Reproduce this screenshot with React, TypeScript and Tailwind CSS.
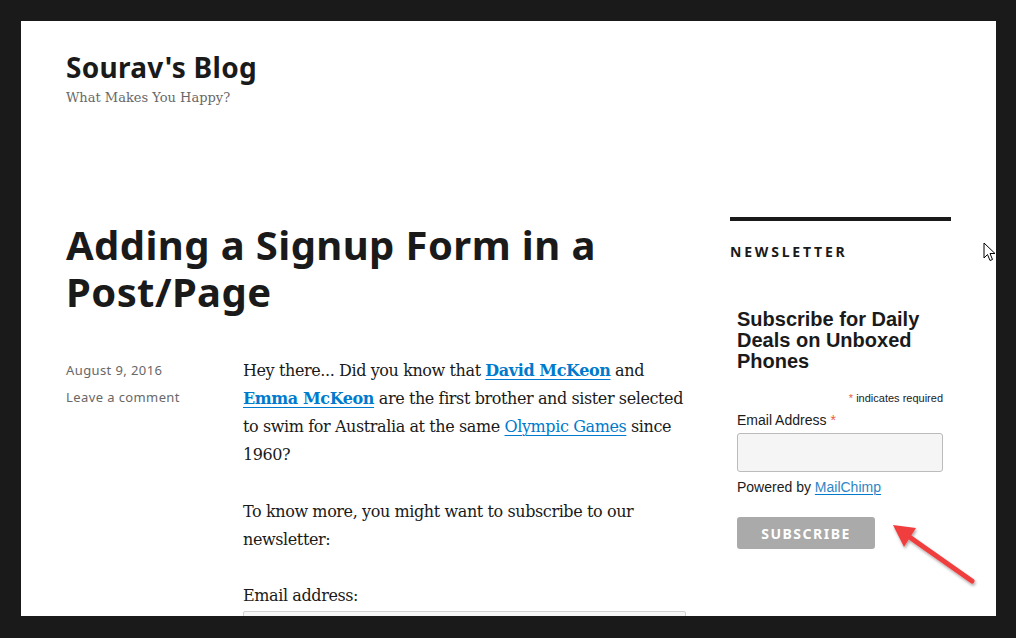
import React from 'react'

const sans = { fontFamily: '"Noto Sans", "Open Sans", sans-serif' }
const serif = { fontFamily: '"DejaVu Serif", "Liberation Serif", serif' }
const arial = { fontFamily: '"Liberation Sans", Arial, sans-serif' }

function Arrow() {
  return (
    <svg className="absolute left-[880px] top-[512px]" width="110" height="90" viewBox="0 0 110 90">
      <defs>
        <filter id="sh" x="-20%" y="-20%" width="140%" height="140%">
          <feDropShadow dx="1" dy="2" stdDeviation="1.5" floodColor="#000" floodOpacity="0.35" />
        </filter>
      </defs>
      <g filter="url(#sh)">
        <line x1="28" y1="24" x2="92" y2="69" stroke="#f03e3e" strokeWidth="5" strokeLinecap="round" />
        <polygon points="13,13 36,16 24,35" fill="#f03e3e" />
      </g>
    </svg>
  )
}

function Cursor() {
  return (
    <svg className="absolute left-[983px] top-[242px]" width="14" height="21" viewBox="0 0 14 21">
      <path d="M1 1 L1 16 L4.5 12.5 L7 18.5 L9.5 17.5 L7 11.5 L12 11.5 Z" fill="#fff" stroke="#000" strokeWidth="1" strokeLinejoin="round" />
    </svg>
  )
}

export default function App() {
  return (
    <div className="relative w-[1016px] h-[638px] overflow-hidden bg-[#1a1a1a] pt-[21px] pl-[21px]">
      <div className="w-[975px] h-[595px] overflow-hidden bg-white px-[45px] text-[#1a1a1a]">
        {/* Site header */}
        <header className="pt-[28px]">
          <div className="text-[28px] font-bold leading-[36px] tracking-[0.3px]" style={sans}>
            Sourav's Blog
          </div>
          <div className="text-[13px] leading-[18px] text-[#686868] mt-[4px]" style={serif}>
            What Makes You Happy?
          </div>
        </header>

        <div className="flex gap-[44px] mt-[110px]">
          {/* Main column */}
          <main className="w-[620px]">
            <h1 className="text-[40px] font-bold leading-[47px] mt-[4px] tracking-[0.4px]" style={sans}>
              Adding a Signup Form in a Post/Page
            </h1>

            <div className="flex mt-[42px]">
              <div className="w-[177px] shrink-0 text-[13px] text-[#686868] pt-[3px] tracking-[0.4px]" style={sans}>
                <div className="leading-[20px]">August 9, 2016</div>
                <div className="leading-[20px] mt-[7px]">Leave a comment</div>
              </div>
              <div className="w-[443px] text-[16px] leading-[28px] tracking-[-0.4px]" style={serif}>
                <p>
                  Hey there... Did you know that{' '}
                  <a className="font-bold text-[#007acc] underline decoration-1 underline-offset-[3px]">David McKeon</a> and{' '}
                  <a className="font-bold text-[#007acc] underline decoration-1 underline-offset-[3px]">Emma McKeon</a> are the first brother and sister selected to swim for Australia at the same{' '}
                  <a className="text-[#007acc] underline decoration-1 underline-offset-[3px]">Olympic Games</a> since 1960?
                </p>
                <p className="mt-[29px]">To know more, you might want to subscribe to our newsletter:</p>
                <p className="mt-[28px]">Email address:</p>
                <div className="mt-[1px] h-[40px] w-full rounded-[2px] border border-[#d1d1d1] bg-[#f7f7f7]" />
              </div>
            </div>
          </main>

          {/* Sidebar */}
          <aside className="w-[221px] shrink-0">
            <div className="h-[4px] bg-[#1a1a1a]" />
            <h2 className="mt-[21px] text-[14px] font-bold tracking-[2.8px] leading-[20px]" style={sans}>
              NEWSLETTER
            </h2>
            <div className="pl-[7px] pr-[8px] mt-[47px]" style={arial}>
              <h3 className="text-[20px] font-bold leading-[21px]">Subscribe for Daily Deals on Unboxed Phones</h3>
              <div className="mt-[19px] text-right text-[11px] leading-[14px]">
                <span className="text-[#e85c41]">*</span> indicates required
              </div>
              <label className="block mt-[6px] text-[14px] leading-[18px]">
                Email Address <span className="text-[#e85c41]">*</span>
              </label>
              <div className="mt-[4px] h-[39px] rounded-[3px] border border-[#bbb] bg-[#f5f5f5]" />
              <div className="mt-[6px] text-[14px] leading-[18px]">
                Powered by <a className="text-[#2f86c4] underline decoration-1 underline-offset-2 decoration-[#007acc]">MailChimp</a>
              </div>
              <button
                className="mt-[21px] h-[32px] w-[138px] rounded-[3px] bg-[#aaaaaa] text-[14px] font-bold tracking-[1.5px] text-white"
                style={sans}
              >
                SUBSCRIBE
              </button>
            </div>
          </aside>
        </div>
      </div>
      <Cursor />
      <Arrow />
    </div>
  )
}
